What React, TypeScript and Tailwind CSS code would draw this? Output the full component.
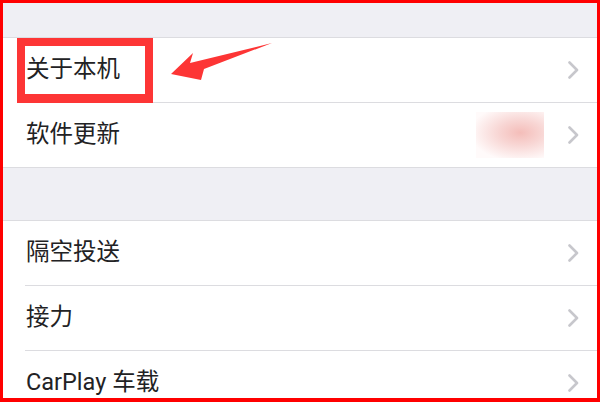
import React from 'react';

const Chevron = () => (
  <svg width="11" height="18" viewBox="0 0 11 18" fill="none" className="shrink-0">
    <polyline points="1.5,1.5 9,9 1.5,16.5" stroke="#c7c7cc" strokeWidth="2.6" strokeLinecap="round" strokeLinejoin="round" />
  </svg>
);

interface RowProps {
  label: string;
  extra?: React.ReactNode;
  last?: boolean;
}

const Row: React.FC<RowProps> = ({ label, extra, last }) => (
  <>
    <div className="flex h-16 items-center pl-[23px] pr-[18px]">
      <span className="flex-1 text-[23.5px] text-[#222224] leading-none">{label}</span>
      {extra}
      <Chevron />
    </div>
    {!last && <div className="ml-[22px] h-px bg-[#dcdce0]" />}
  </>
);

export default function App() {
  return (
    <div
      className="relative w-[600px] h-[402px] overflow-hidden border-[3px] border-b-4 border-[#ff0000] bg-[#efeff4]"
      style={{ fontFamily: '"Roboto", "Noto Sans CJK SC", sans-serif' }}
    >
      <div className="h-[34px]" />
      <div className="border-y border-[#dcdce0] bg-white">
        <Row label="关于本机" />
        <Row
          label="软件更新"
          last
          extra={
            <div className="mr-[24px] h-[46px] w-[68px] bg-[radial-gradient(ellipse_at_65%_45%,#f4bdb9_0%,#f8d6d4_35%,#fffafa_80%)]" />
          }
        />
      </div>
      <div className="h-[52px]" />
      <div className="border-y border-[#dcdce0] bg-white">
        <Row label="隔空投送" />
        <Row label="接力" />
        <Row label="CarPlay 车载" last />
      </div>

      {/* annotation box */}
      <div className="absolute left-[14px] top-[35px] h-[65px] w-[136px] border-8 border-b-[9px] border-[#fd3535]" />

      {/* annotation arrow */}
      <svg className="absolute left-0 top-0" width="594" height="395" viewBox="3 3 594 395">
        <polygon
          points="171,74 193,53 190,63 272,43 204,69 201,80"
          fill="#fd3535"
        />
      </svg>
    </div>
  );
}
